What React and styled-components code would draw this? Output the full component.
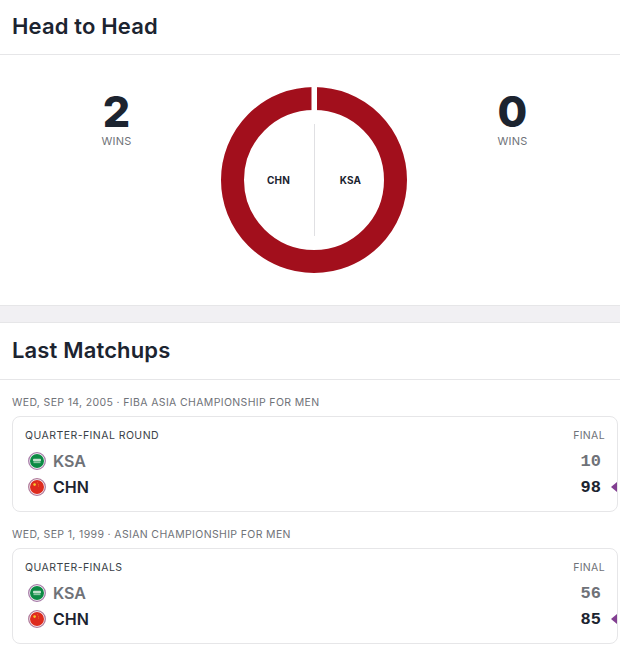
import React from "react";
import styled, { createGlobalStyle } from "styled-components";

const Global = createGlobalStyle`
  html, body { margin: 0; padding: 0; background: #fff; }
  body { font-family: Inter, "Liberation Sans", sans-serif; color: #1c2430; }
`;
const Page = styled.div`width: 620px; height: 648px; overflow: hidden; background: #fff;`;
const Header = styled.header`
  display: flex; align-items: center; padding: 0 12px 2px;
  border-bottom: 1px solid #e6e6e8; box-sizing: border-box; height: ${p => (p.$tall ? "57px" : "55px")};
`;
const Title = styled.h2`
  margin: 0; font-size: 22px; font-weight: 600; letter-spacing: 0.15px; color: #1c2430;
`;
const Versus = styled.section`
  height: 250px; display: grid; grid-template-columns: 209px 186px 211px;
  padding: 0 2px 0 12px; box-sizing: content-box;
`;
const Tally = styled.div`
  display: flex; flex-direction: column; align-items: center; padding-top: 35px;
`;
const TallyValue = styled.div`
  font-size: 43px; line-height: 42px; font-weight: 800; color: #1c2430;
`;
const TallyLabel = styled.div`
  font-size: 11px; line-height: 14px; margin-top: 2px; letter-spacing: 0.2px; color: #6f7278;
`;
const Donut = styled.div`
  position: relative; width: 186px; height: 186px; margin-top: 32px;
`;
const DonutOverlay = styled.div`
  position: absolute; inset: 37px 0; display: flex; align-items: center; justify-content: center;
`;
const DonutDivider = styled.div`width: 1px; height: 112px; background: #e0e0e3;`;
const DonutLabel = styled.span`
  width: 71px; padding-left: 1px; box-sizing: border-box; font-size: 10px; letter-spacing: 0.2px;
  font-weight: 700; text-align: center; color: #1c2430;
`;
const Gutter = styled.div`
  height: 16px; background: #f1f0f3; border-top: 1px solid #e6e6e8; border-bottom: 1px solid #e6e6e8;
`;
const Matches = styled.section`padding: 0 2px 0 12px;`;
const DateLine = styled.div`
  font-size: 10.5px; line-height: 14px; letter-spacing: 0.36px; color: #6f7278; padding: 16px 0 6px;
`;
const Card = styled.article`
  position: relative; height: 94px; border: 1px solid #e6e6e8; border-radius: 8px;
  box-sizing: content-box; padding: 0 12px;
`;
const CardTop = styled.div`
  display: flex; justify-content: space-between; align-items: center; height: 37px;
  font-size: 10.5px; letter-spacing: 0.45px; color: #3a3f48;
`;
const FinalTag = styled.span`color: #6f7278; letter-spacing: 0.35px;`;
const Row = styled.div`
  height: 26px; display: flex; align-items: center; gap: 7px; padding-left: 3px;
  margin-top: ${p => (p.$first ? "-6px" : "0")};
`;
const Team = styled.span`
  font-size: 16px; font-weight: 600; color: ${p => (p.$win ? "#1c2430" : "#6f7278")}; flex: 1;
`;
const Score = styled.span`
  font-family: "Liberation Mono", monospace; font-size: 17px; font-weight: 700;
  margin-right: 4px; color: ${p => (p.$win ? "#1c2430" : "#6f7278")};
`;
const WinArrow = styled.i`
  position: absolute; right: 0; bottom: 19px; width: 0; height: 0;
  border-style: solid; border-width: 5px 6px 5px 0; border-color: transparent #823f91 transparent transparent;
`;

const Saudi = () => (
  <svg width="18" height="18" viewBox="0 0 18 18">
    <circle cx="9" cy="9" r="8.3" fill="#fff" stroke="#a77da8" strokeWidth="1.3" />
    <circle cx="9" cy="9" r="7" fill="#0c8a44" />
    <rect x="5" y="6.8" width="8" height="2.6" rx="0.8" fill="#bfe0ca" />
    <rect x="5.5" y="10.3" width="7" height="0.8" fill="#bfe0ca" />
  </svg>
);
const China = () => (
  <svg width="18" height="18" viewBox="0 0 18 18">
    <circle cx="9" cy="9" r="8.3" fill="#fff" stroke="#b07a9a" strokeWidth="1.3" />
    <circle cx="9" cy="9" r="7" fill="#de2b1e" />
    <circle cx="6.6" cy="6.6" r="1.3" fill="#f6c92b" />
    <circle cx="9.4" cy="4.8" r=".4" fill="#f6c92b" />
    <circle cx="10.4" cy="6.2" r=".4" fill="#f6c92b" />
    <circle cx="10.4" cy="8" r=".4" fill="#f6c92b" />
  </svg>
);

const matches = [
  { date: "WED, SEP 14, 2005 · FIBA ASIA CHAMPIONSHIP FOR MEN", round: "QUARTER-FINAL ROUND", ksa: 10, chn: 98 },
  { date: "WED, SEP 1, 1999 · ASIAN CHAMPIONSHIP FOR MEN", round: "QUARTER-FINALS", ksa: 56, chn: 85 },
];

export default function App() {
  return (
    <Page>
      <Global />
      <Header><Title>Head to Head</Title></Header>
      <Versus>
        <Tally><TallyValue>2</TallyValue><TallyLabel>WINS</TallyLabel></Tally>
        <Donut>
          <svg width="186" height="186" viewBox="0 0 186 186">
            <circle cx="93" cy="93" r="81.5" fill="none" stroke="#a20f1c" strokeWidth="23" />
            <rect x="90.5" y="0" width="5.5" height="24" fill="#fff" />
          </svg>
          <DonutOverlay>
            <DonutLabel>CHN</DonutLabel>
            <DonutDivider />
            <DonutLabel>KSA</DonutLabel>
          </DonutOverlay>
        </Donut>
        <Tally><TallyValue>0</TallyValue><TallyLabel>WINS</TallyLabel></Tally>
      </Versus>
      <Gutter />
      <Header $tall><Title>Last Matchups</Title></Header>
      <Matches>
        {matches.map(m => (
          <div key={m.date}>
            <DateLine>{m.date}</DateLine>
            <Card>
              <CardTop><span>{m.round}</span><FinalTag>FINAL</FinalTag></CardTop>
              <Row $first><Saudi /><Team>KSA</Team><Score>{m.ksa}</Score></Row>
              <Row><China /><Team $win>CHN</Team><Score $win>{m.chn}</Score></Row>
              <WinArrow />
            </Card>
          </div>
        ))}
      </Matches>
    </Page>
  );
}
